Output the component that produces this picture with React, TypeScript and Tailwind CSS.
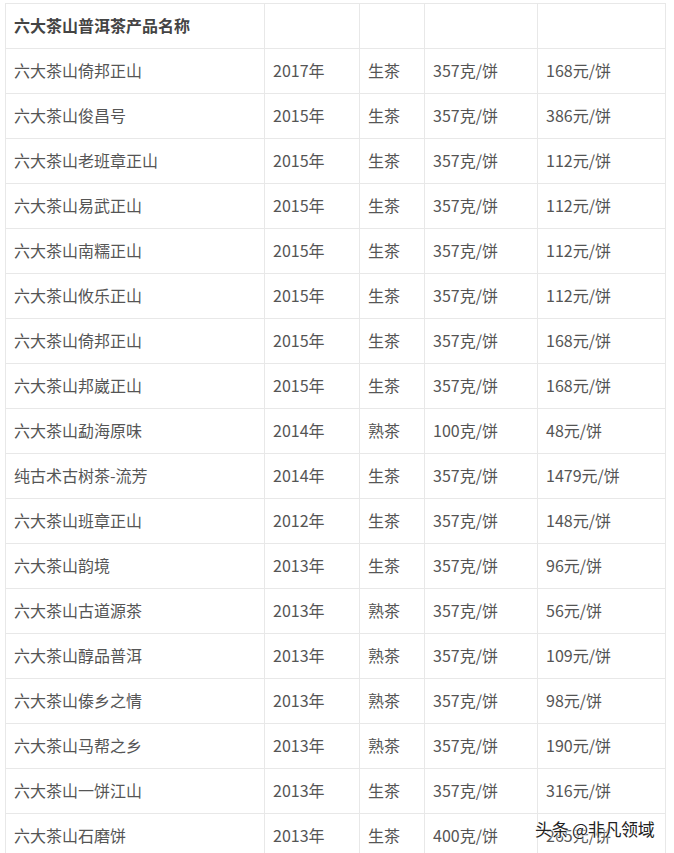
import React from 'react';

const rows: [string, string, string, string, string][] = [
  ['六大茶山倚邦正山', '2017年', '生茶', '357克/饼', '168元/饼'],
  ['六大茶山俊昌号', '2015年', '生茶', '357克/饼', '386元/饼'],
  ['六大茶山老班章正山', '2015年', '生茶', '357克/饼', '112元/饼'],
  ['六大茶山易武正山', '2015年', '生茶', '357克/饼', '112元/饼'],
  ['六大茶山南糯正山', '2015年', '生茶', '357克/饼', '112元/饼'],
  ['六大茶山攸乐正山', '2015年', '生茶', '357克/饼', '112元/饼'],
  ['六大茶山倚邦正山', '2015年', '生茶', '357克/饼', '168元/饼'],
  ['六大茶山邦崴正山', '2015年', '生茶', '357克/饼', '168元/饼'],
  ['六大茶山勐海原味', '2014年', '熟茶', '100克/饼', '48元/饼'],
  ['纯古术古树茶-流芳', '2014年', '生茶', '357克/饼', '1479元/饼'],
  ['六大茶山班章正山', '2012年', '生茶', '357克/饼', '148元/饼'],
  ['六大茶山韵境', '2013年', '生茶', '357克/饼', '96元/饼'],
  ['六大茶山古道源茶', '2013年', '熟茶', '357克/饼', '56元/饼'],
  ['六大茶山醇品普洱', '2013年', '熟茶', '357克/饼', '109元/饼'],
  ['六大茶山傣乡之情', '2013年', '熟茶', '357克/饼', '98元/饼'],
  ['六大茶山马帮之乡', '2013年', '熟茶', '357克/饼', '190元/饼'],
  ['六大茶山一饼江山', '2013年', '生茶', '357克/饼', '316元/饼'],
  ['六大茶山石磨饼', '2013年', '生茶', '400克/饼', '265元/饼'],
];

const cell = 'h-[45px] border border-[#e8e8e8] pl-[8px] pr-2 pb-[2px] align-middle';

export default function App() {
  return (
    <div
      className="relative h-[853px] w-[674px] overflow-hidden bg-white pl-[5px] pt-[3px] text-[16px] text-[#555] antialiased"
      style={{ fontFamily: '"Microsoft YaHei", "Noto Sans CJK SC", sans-serif' }}
    >
      <table className="w-[660px] table-fixed border-collapse">
        <colgroup>
          <col className="w-[259px]" />
          <col className="w-[95px]" />
          <col className="w-[65px]" />
          <col className="w-[113px]" />
          <col className="w-[128px]" />
        </colgroup>
        <tbody>
          <tr>
            <td className={`${cell} font-bold text-[#444]`}>六大茶山普洱茶产品名称</td>
            <td className={cell}></td>
            <td className={cell}></td>
            <td className={cell}></td>
            <td className={cell}></td>
          </tr>
          {rows.map((r, i) => (
            <tr key={i}>
              {r.map((c, j) => (
                <td key={j} className={`${cell} whitespace-nowrap`}>
                  {c}
                </td>
              ))}
            </tr>
          ))}
        </tbody>
      </table>

      {/* watermark */}
      <div
        className="absolute left-[535px] top-[820px] whitespace-nowrap text-[17px] leading-none tracking-[-0.3px] text-[#222]"
        style={{ textShadow: '0 0 2px #fff, 0 0 2px #fff, 0 0 3px #fff' }}
      >
        头条 @非凡领域
      </div>
    </div>
  );
}
